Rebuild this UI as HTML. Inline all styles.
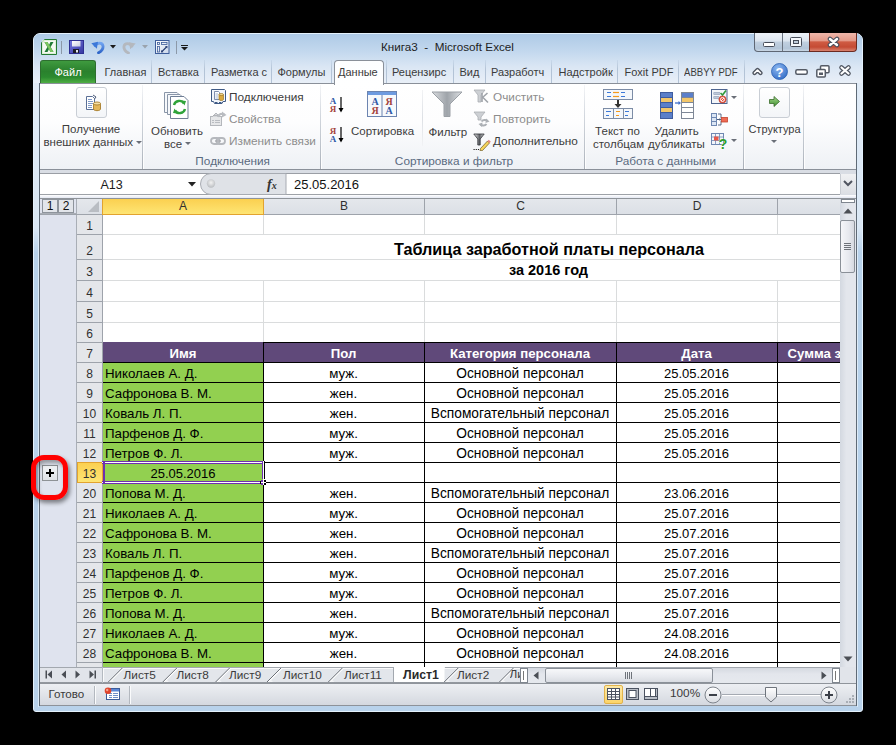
<!DOCTYPE html><html><head><meta charset="utf-8"><style>
html,body{margin:0;padding:0;width:896px;height:745px;overflow:hidden;background:#000;}
body{position:relative;font-family:"Liberation Sans",sans-serif;}
div{box-sizing:border-box;}
.t{position:absolute;white-space:nowrap;}
svg{display:block;}
</style></head><body>
<div style="position:absolute;left:33px;top:33px;width:830px;height:679px;background:#B8D2EB;border-radius:7px 7px 3px 3px;border:1px solid #E4F1FC;"></div>
<div style="position:absolute;left:34px;top:34px;width:828px;height:50px;background:linear-gradient(#AECAE6,#C3D8EE 35%,#DAE6F4 65%,#EAF0F8);border-radius:6px 6px 0 0;"></div>
<div style="position:absolute;left:34px;top:83px;width:5px;height:170px;background:linear-gradient(#E1EBF6,#DAE7F4 85%,#B8D2EB);"></div>
<div style="position:absolute;left:857px;top:83px;width:5px;height:170px;background:linear-gradient(#E1EBF6,#DAE7F4 85%,#B8D2EB);"></div>
<div style="position:absolute;left:38px;top:83px;width:1px;height:624px;background:#DCEAF7;"></div>
<div style="position:absolute;left:857px;top:83px;width:1px;height:624px;background:#DCEAF7;"></div>
<svg style="position:absolute;left:41px;top:39px;" width="16" height="16" viewBox="0 0 16 16"><path d="M3.5 0.5 H15.5 V15.5 H0.5 V3.5 Z" fill="#F4F9F2" stroke="#237A33"/>
<path d="M3.5 0.8 L0.8 3.5 H3.5 Z" fill="#D5E8D0"/>
<rect x="1.5" y="1.5" width="13" height="13" fill="none" stroke="#D8EBD3" stroke-width="0.8"/>
<path d="M3.5 3 H6.5 L8 6 L9.5 3 H12.5 L9.6 8 L12.5 13 H9.5 L8 10 L6.5 13 H3.5 L6.4 8 Z" fill="#1E7A35"/>
<path d="M3.5 3 H6.5 L12.5 13 H9.5 Z" fill="#7CC660"/></svg>
<div style="position:absolute;left:61px;top:41px;width:1px;height:13px;background:#8C99A8;"></div>
<svg style="position:absolute;left:69px;top:40px;" width="15" height="14" viewBox="0 0 15 14"><defs><linearGradient id="svg1" x1="0" y1="0" x2="1" y2="1"><stop offset="0" stop-color="#7678E0"/><stop offset="1" stop-color="#3436A0"/></linearGradient>
<linearGradient id="svg2" x1="0" y1="0" x2="1" y2="1"><stop offset="0" stop-color="#FFFFFF"/><stop offset="1" stop-color="#C9CCE0"/></linearGradient></defs>
<rect x="0.5" y="0.5" width="14" height="13" fill="url(#svg1)" stroke="#2E3092"/>
<rect x="3" y="1" width="8.5" height="5.5" fill="url(#svg2)"/>
<rect x="4" y="9" width="6" height="4" fill="#1C1C28"/>
<rect x="7" y="10" width="2" height="2.5" fill="#E6E8F0"/></svg>
<svg style="position:absolute;left:91px;top:40px;" width="14" height="14" viewBox="0 0 14 14"><defs><linearGradient id="ug" x1="0" y1="0" x2="0" y2="1"><stop offset="0" stop-color="#6FA3F0"/><stop offset="1" stop-color="#2D64C8"/></linearGradient></defs>
<path d="M4 5.5 C6 2.5 11.5 2 12 6 C12.4 9 10 11.5 7.5 12.8" fill="none" stroke="url(#ug)" stroke-width="2.8" stroke-linecap="round"/>
<path d="M0.3 3.2 L7 1.8 L5.8 8.8 Z" fill="#3C78D8"/></svg>
<svg style="position:absolute;left:110px;top:45px;" width="6" height="4" viewBox="0 0 6 4"><path d="M0 0 L6 0 L3 3.5 Z" fill="#1A1A1A"/></svg>
<svg style="position:absolute;left:122px;top:41px;" width="14" height="13" viewBox="0 0 14 13"><path d="M10 5 C8 1.8 2.5 1.5 2 5.3 C1.6 8.3 4 10.8 6.5 12" fill="none" stroke="#B4B8BE" stroke-width="2.8" stroke-linecap="round"/>
<path d="M13.7 2.6 L7 1.2 L8.2 8.2 Z" fill="#B4B8BE"/></svg>
<svg style="position:absolute;left:142px;top:45px;" width="6" height="4" viewBox="0 0 6 4"><path d="M0 0 L6 0 L3 3.5 Z" fill="#9AA3AD"/></svg>
<svg style="position:absolute;left:155px;top:40px;" width="15" height="14" viewBox="0 0 15 14"><defs><linearGradient id="fmg" x1="0" y1="0" x2="1" y2="1"><stop offset="0" stop-color="#FFFFFF"/><stop offset="1" stop-color="#C9D6EA"/></linearGradient></defs>
<rect x="0.5" y="0.5" width="13.5" height="13" fill="url(#fmg)" stroke="#3D5D9A"/>
<rect x="2.5" y="2.5" width="2" height="2" fill="none" stroke="#3D5D9A" stroke-width="0.8"/><rect x="6.5" y="2.5" width="5.5" height="2" fill="none" stroke="#3D5D9A" stroke-width="0.8"/>
<rect x="2.5" y="6.5" width="2" height="5.5" fill="none" stroke="#3D5D9A" stroke-width="0.8"/>
<path d="M7 11.5 L11.5 7" stroke="#233A70" stroke-width="1.1"/><path d="M10 6.2 L12.5 6 L12.3 8.5 Z" fill="#233A70"/><path d="M6.2 10 L6 12.5 L8.5 12.3 Z" fill="#233A70"/></svg>
<div style="position:absolute;left:176px;top:41px;width:1px;height:13px;background:#8C99A8;"></div>
<div style="position:absolute;left:181px;top:45px;width:7px;height:1px;background:#1A1A1A;"></div>
<svg style="position:absolute;left:181px;top:47px;" width="7" height="4" viewBox="0 0 7 4"><path d="M0 0 L7 0 L3.5 3.5 Z" fill="#1A1A1A"/></svg>
<div class="t" style="left:381px;top:39.5px;font-size:11.7px;color:#1E1E1E;line-height:14px;">Книга3&nbsp;&nbsp;-&nbsp;&nbsp;Microsoft Excel</div>
<div style="position:absolute;left:754px;top:33px;width:56px;height:19px;background:linear-gradient(#EDF2F8,#DCE5EF 45%,#C1D0E0 50%,#B3C5D8 85%,#C9D7E5);border:1px solid #5E6774;border-top:none;border-radius:0 0 0 4px;"></div>
<div style="position:absolute;left:782px;top:33px;width:1px;height:18px;background:#6A7380;"></div>
<svg style="position:absolute;left:763px;top:42px;" width="12" height="5" viewBox="0 0 12 5"><rect x="0.5" y="0.5" width="11" height="4" rx="1" fill="#FFF" stroke="#464C58"/></svg>
<svg style="position:absolute;left:790px;top:37px;" width="12" height="10" viewBox="0 0 12 10"><rect x="0.5" y="0.5" width="11" height="9" rx="1" fill="#F4F7FB" stroke="#464C58"/><rect x="3.5" y="3.5" width="5" height="3" fill="#BFCCDA" stroke="#464C58"/></svg>
<div style="position:absolute;left:809px;top:33px;width:48px;height:19px;background:linear-gradient(#EEB6AA,#E49A89 42%,#CF5B43 50%,#C54B34 78%,#D8826F);border:1px solid #6B2A20;border-top:none;border-radius:0 0 4px 0;"></div>
<svg style="position:absolute;left:826px;top:36px;" width="15" height="12" viewBox="0 0 15 12"><path d="M4 3 L11 9 M11 3 L4 9" stroke="#4A4F5C" stroke-width="4.6" stroke-linecap="round"/><path d="M4 3 L11 9 M11 3 L4 9" stroke="#FFFFFF" stroke-width="2.4" stroke-linecap="round"/></svg>
<div style="position:absolute;left:40px;top:60px;width:56px;height:24px;background:linear-gradient(#3F9A3F,#2A812D 45%,#2B8A2F 70%,#55B447);border:1px solid #2D6E2F;border-bottom:none;border-radius:3px 3px 0 0;"></div>
<div class="t" style="left:54.5px;top:66.69px;font-size:11px;color:#FFFFFF;line-height:11px;">Файл</div>
<div style="position:absolute;left:151px;top:60px;width:1px;height:23px;background:linear-gradient(rgba(160,180,205,0.2),#B3C3D6 40%,#B3C3D6);"></div>
<div style="position:absolute;left:204px;top:60px;width:1px;height:23px;background:linear-gradient(rgba(160,180,205,0.2),#B3C3D6 40%,#B3C3D6);"></div>
<div style="position:absolute;left:271px;top:60px;width:1px;height:23px;background:linear-gradient(rgba(160,180,205,0.2),#B3C3D6 40%,#B3C3D6);"></div>
<div style="position:absolute;left:331px;top:60px;width:1px;height:23px;background:linear-gradient(rgba(160,180,205,0.2),#B3C3D6 40%,#B3C3D6);"></div>
<div style="position:absolute;left:386px;top:60px;width:1px;height:23px;background:linear-gradient(rgba(160,180,205,0.2),#B3C3D6 40%,#B3C3D6);"></div>
<div style="position:absolute;left:453px;top:60px;width:1px;height:23px;background:linear-gradient(rgba(160,180,205,0.2),#B3C3D6 40%,#B3C3D6);"></div>
<div style="position:absolute;left:485px;top:60px;width:1px;height:23px;background:linear-gradient(rgba(160,180,205,0.2),#B3C3D6 40%,#B3C3D6);"></div>
<div style="position:absolute;left:551px;top:60px;width:1px;height:23px;background:linear-gradient(rgba(160,180,205,0.2),#B3C3D6 40%,#B3C3D6);"></div>
<div style="position:absolute;left:617px;top:60px;width:1px;height:23px;background:linear-gradient(rgba(160,180,205,0.2),#B3C3D6 40%,#B3C3D6);"></div>
<div style="position:absolute;left:678px;top:60px;width:1px;height:23px;background:linear-gradient(rgba(160,180,205,0.2),#B3C3D6 40%,#B3C3D6);"></div>
<div style="position:absolute;left:744px;top:60px;width:1px;height:23px;background:linear-gradient(rgba(160,180,205,0.2),#B3C3D6 40%,#B3C3D6);"></div>
<div class="t" style="left:104.5px;top:66.69px;font-size:11px;color:#3B3B3B;line-height:11px;">Главная</div>
<div class="t" style="left:158px;top:66.69px;font-size:11px;color:#3B3B3B;line-height:11px;">Вставка</div>
<div style="position:absolute;left:211px;top:60px;width:59px;height:23px;overflow:hidden;"><div class="t" style="left:0;top:6.69px;font-size:11px;line-height:11px;color:#3B3B3B;">Разметка с</div></div>
<div class="t" style="left:277.5px;top:66.69px;font-size:11px;color:#3B3B3B;line-height:11px;">Формулы</div>
<div style="position:absolute;left:392px;top:60px;width:60px;height:23px;overflow:hidden;"><div class="t" style="left:0;top:6.69px;font-size:11px;line-height:11px;color:#3B3B3B;">Рецензирс</div></div>
<div class="t" style="left:459.5px;top:66.69px;font-size:11px;color:#3B3B3B;line-height:11px;">Вид</div>
<div style="position:absolute;left:491px;top:60px;width:59px;height:23px;overflow:hidden;"><div class="t" style="left:0;top:6.69px;font-size:11px;line-height:11px;color:#3B3B3B;">Разработч</div></div>
<div style="position:absolute;left:558.5px;top:60px;width:54.5px;height:23px;overflow:hidden;"><div class="t" style="left:0;top:6.69px;font-size:11px;line-height:11px;color:#3B3B3B;">Надстройк</div></div>
<div class="t" style="left:624.5px;top:66.69px;font-size:11px;color:#3B3B3B;line-height:11px;">Foxit PDF</div>
<div style="position:absolute;left:683.5px;top:60px;width:59.5px;height:23px;overflow:hidden;"><div class="t" style="left:0;top:6.69px;font-size:11px;line-height:11px;color:#3B3B3B;transform:scaleX(0.87);transform-origin:0 0;">ABBYY PDF</div></div>
<div style="position:absolute;left:39px;top:83px;width:818px;height:87px;background:linear-gradient(#FFFFFF,#FDFDFE 45%,#EEF1F5);border:1px solid #8A9099;"></div>
<div style="position:absolute;left:334px;top:60px;width:50px;height:25px;background:linear-gradient(#FDFEFF,#FFFFFF);border:1px solid #8A9099;border-bottom:none;border-radius:4px 4px 0 0;"></div>
<div class="t" style="left:338px;top:66.69px;font-size:11px;color:#3B3B3B;line-height:11px;">Данные</div>
<svg style="position:absolute;left:751px;top:65px;" width="13" height="12" viewBox="0 0 13 12"><path d="M3.5 8 L6.5 5 L9.5 8" fill="none" stroke="#4F5560" stroke-width="4.4" stroke-linejoin="round" stroke-linecap="round"/><path d="M3.5 8 L6.5 5 L9.5 8" fill="none" stroke="#FFFFFF" stroke-width="1.6" stroke-linejoin="round" stroke-linecap="round"/></svg>
<svg style="position:absolute;left:770.5px;top:62.5px;" width="17" height="17" viewBox="0 0 17 17"><defs><radialGradient id="hg" cx="0.4" cy="0.3" r="0.8"><stop offset="0" stop-color="#8DB8F0"/><stop offset="1" stop-color="#2E68C4"/></radialGradient></defs><circle cx="8.5" cy="8.5" r="8" fill="url(#hg)" stroke="#2A5FB0" stroke-width="0.8"/><text x="8.5" y="13.5" font-family="Liberation Sans" font-weight="bold" font-size="13" fill="#FFF" text-anchor="middle">?</text></svg>
<svg style="position:absolute;left:795px;top:69px;" width="13" height="6" viewBox="0 0 13 6"><rect x="0.8" y="0.8" width="11.4" height="4.4" rx="1.5" fill="#FFF" stroke="#555B66" stroke-width="1.5"/></svg>
<svg style="position:absolute;left:816px;top:65px;" width="14" height="13" viewBox="0 0 14 13"><rect x="4.5" y="0.8" width="8.5" height="7" rx="1" fill="#FFF" stroke="#555B66" stroke-width="1.5"/><rect x="0.8" y="4.5" width="8.5" height="7.5" rx="1" fill="#FFF" stroke="#555B66" stroke-width="1.5"/><rect x="3" y="7.5" width="4" height="2.5" fill="#555B66"/></svg>
<svg style="position:absolute;left:838px;top:64px;" width="14" height="13" viewBox="0 0 14 13"><path d="M3.5 3.5 L10.5 9.5 M10.5 3.5 L3.5 9.5" stroke="#4F5560" stroke-width="4.6" stroke-linecap="round"/><path d="M3.5 3.5 L10.5 9.5 M10.5 3.5 L3.5 9.5" stroke="#FFF" stroke-width="2.2" stroke-linecap="round"/></svg>
<div style="position:absolute;left:142px;top:85px;width:1px;height:84px;background:linear-gradient(rgba(220,224,230,0.3),#D3D8DF 35%,#B9BFC7 80%,#A9AFB8);"></div>
<div style="position:absolute;left:143px;top:110px;width:1px;height:59px;background:linear-gradient(rgba(255,255,255,0),#FFFFFF);"></div>
<div style="position:absolute;left:320px;top:85px;width:1px;height:84px;background:linear-gradient(rgba(220,224,230,0.3),#D3D8DF 35%,#B9BFC7 80%,#A9AFB8);"></div>
<div style="position:absolute;left:321px;top:110px;width:1px;height:59px;background:linear-gradient(rgba(255,255,255,0),#FFFFFF);"></div>
<div style="position:absolute;left:584px;top:85px;width:1px;height:84px;background:linear-gradient(rgba(220,224,230,0.3),#D3D8DF 35%,#B9BFC7 80%,#A9AFB8);"></div>
<div style="position:absolute;left:585px;top:110px;width:1px;height:59px;background:linear-gradient(rgba(255,255,255,0),#FFFFFF);"></div>
<div style="position:absolute;left:743px;top:85px;width:1px;height:84px;background:linear-gradient(rgba(220,224,230,0.3),#D3D8DF 35%,#B9BFC7 80%,#A9AFB8);"></div>
<div style="position:absolute;left:744px;top:110px;width:1px;height:59px;background:linear-gradient(rgba(255,255,255,0),#FFFFFF);"></div>
<div style="position:absolute;left:803px;top:85px;width:1px;height:84px;background:linear-gradient(rgba(220,224,230,0.3),#D3D8DF 35%,#B9BFC7 80%,#A9AFB8);"></div>
<div style="position:absolute;left:804px;top:110px;width:1px;height:59px;background:linear-gradient(rgba(255,255,255,0),#FFFFFF);"></div>
<div style="position:absolute;left:76px;top:87px;width:31px;height:31px;background:linear-gradient(#FFFFFF,#F3F5F8);border:1px solid #C9CED5;border-radius:3px;"></div>
<svg style="position:absolute;left:83px;top:94px;" width="18" height="18" viewBox="0 0 18 18"><path d="M3.5 2.5 H9.5 L11.5 4.5 V15.5 H3.5 Z" fill="#FFFFFF" stroke="#5A6F96"/>
<path d="M5 5.5 H9 M5 7.5 H10 M5 9.5 H10 M5 11.5 H9 M5 13.5 H9" stroke="#7F9AC8"/>
<path d="M10 1 L13 3 L11.5 5" fill="none" stroke="#4A5A78" stroke-width="1"/>
<path d="M10.5 9.5 V15 C10.5 17.2 17.5 17.2 17.5 15 V9.5" fill="#E3B75A" stroke="#A67C2A" stroke-width="0.9"/>
<ellipse cx="14" cy="9.5" rx="3.5" ry="1.5" fill="#F6E0A4" stroke="#A67C2A" stroke-width="0.9"/></svg>
<div class="t" style="left:-59.0px;top:123.87px;font-size:11.5px;color:#3C3C3C;line-height:11.5px;width:300px;text-align:center;">Получение</div>
<div class="t" style="left:43.5px;top:136.87px;font-size:11.5px;color:#3C3C3C;line-height:11.5px;">внешних данных</div>
<svg style="position:absolute;left:135.5px;top:141px;" width="6" height="4" viewBox="0 0 6 4"><path d="M0 0 L6 0 L3 3 Z" fill="#6A6F78"/></svg>
<svg style="position:absolute;left:162px;top:90px;" width="30" height="30" viewBox="0 0 30 30"><path d="M2.5 2.5 H15 L18 5.5 V22.5 H2.5 Z" fill="#F6F8FB" stroke="#8A96A8"/>
<path d="M5.5 4.5 H18 L21 7.5 V24.5 H5.5 Z" fill="#F6F8FB" stroke="#8A96A8"/>
<path d="M8.5 6.5 H22 L26 10.5 V28.5 H8.5 Z" fill="#FFFFFF" stroke="#6F7E95"/>
<path d="M12 15 A5.5 5.5 0 0 1 22 13.5" fill="none" stroke="#2FA33A" stroke-width="2.4"/>
<path d="M23 19 A5.5 5.5 0 0 1 13 20.5" fill="none" stroke="#2FA33A" stroke-width="2.4"/>
<path d="M19.5 10.5 L24 11 L22.5 15.5 Z" fill="#2FA33A"/><path d="M15.5 23.5 L11 23 L12.5 18.5 Z" fill="#2FA33A"/></svg>
<div class="t" style="left:27.0px;top:126.07px;font-size:11.5px;color:#3C3C3C;line-height:11.5px;width:300px;text-align:center;">Обновить</div>
<div class="t" style="left:164px;top:138.77px;font-size:11.5px;color:#3C3C3C;line-height:11.5px;">все</div>
<svg style="position:absolute;left:184.5px;top:142px;" width="6" height="4" viewBox="0 0 6 4"><path d="M0 0 L6 0 L3 3 Z" fill="#6A6F78"/></svg>
<svg style="position:absolute;left:210px;top:89px;" width="17" height="16" viewBox="0 0 17 16"><path d="M1.5 0.5 H14.5 L15.5 1.5 V12.5 H13 L12 14.5 H4.5 L3.5 12.5 H1.5 Z" fill="#F2F6FC" stroke="#3F5A85"/>
<path d="M4.5 2.5 H8.5 L9.5 3.5 V10.5 H4.5 Z" fill="#FFFFFF" stroke="#5E7299" stroke-width="0.8"/>
<path d="M5.5 5 H8 M5.5 7 H8 M5.5 9 H8" stroke="#8FA4C8" stroke-width="0.8"/>
<path d="M9 5.5 V10.5 C9 11.8 13.5 11.8 13.5 10.5 V5.5" fill="#D9A93E" stroke="#9A7424" stroke-width="0.7"/>
<ellipse cx="11.25" cy="5.5" rx="2.25" ry="1" fill="#F3D98F" stroke="#9A7424" stroke-width="0.7"/>
<path d="M5 13.5 H7.5 M9 13.5 H11.5" stroke="#3F5A85"/></svg>
<div class="t" style="left:229px;top:91.81px;font-size:11.8px;color:#3C3C3C;line-height:11.8px;">Подключения</div>
<svg style="position:absolute;left:210px;top:111px;" width="17" height="16" viewBox="0 0 17 16"><rect x="0.5" y="5.5" width="11" height="9" fill="#E6E7E9" stroke="#B4B7BC"/>
<path d="M2 9.5 H4 M5 9.5 H10 M2 11.5 H4 M5 11.5 H10" stroke="#B9BCC1"/>
<path d="M2 6 L6 2 L10 6" fill="#D5D7DA" stroke="#B4B7BC"/>
<path d="M3 5 L4 4 L5 5 L6 4 L7 5 L8 4" fill="none" stroke="#A8ABB0" stroke-width="0.8"/>
<path d="M8 6 C9 3 12 2 14 3.5" fill="none" stroke="#B9BCC1" stroke-width="2.2"/>
<path d="M12 0.5 L16.5 4 L12 6.5 Z" fill="#B9BCC1"/></svg>
<div class="t" style="left:229px;top:113.81px;font-size:11.8px;color:#8D8D8D;line-height:11.8px;">Свойства</div>
<svg style="position:absolute;left:210px;top:134px;" width="17" height="14" viewBox="0 0 17 14"><rect x="1" y="4" width="8.5" height="6" rx="3" fill="none" stroke="#B5B8BD" stroke-width="1.8"/><rect x="6.5" y="4" width="8.5" height="6" rx="3" fill="none" stroke="#B5B8BD" stroke-width="1.8"/><path d="M5 7 H11" stroke="#A3A6AB" stroke-width="1.2"/></svg>
<div class="t" style="left:229px;top:135.81px;font-size:11.8px;color:#8D8D8D;line-height:11.8px;">Изменить связи</div>
<div class="t" style="left:82.69999999999999px;top:156.01px;font-size:11.8px;color:#5A6A80;line-height:11.8px;width:300px;text-align:center;">Подключения</div>
<svg style="position:absolute;left:329px;top:96px;" width="16" height="18" viewBox="0 0 16 18"><text x="4" y="8" font-family="Liberation Serif" font-weight="bold" font-size="9" fill="#2F57A6" text-anchor="middle">A</text>
<text x="4" y="16" font-family="Liberation Serif" font-weight="bold" font-size="9" fill="#A4433C" text-anchor="middle">Я</text>
<path d="M12 1 V15" stroke="#000" stroke-width="1.2"/><path d="M9.5 12 L12 16.5 L14.5 12Z" fill="#000"/></svg>
<svg style="position:absolute;left:329px;top:126px;" width="16" height="18" viewBox="0 0 16 18"><text x="4" y="8" font-family="Liberation Serif" font-weight="bold" font-size="9" fill="#A4433C" text-anchor="middle">Я</text>
<text x="4" y="16" font-family="Liberation Serif" font-weight="bold" font-size="9" fill="#2F57A6" text-anchor="middle">A</text>
<path d="M12 1 V15" stroke="#000" stroke-width="1.2"/><path d="M9.5 12 L12 16.5 L14.5 12Z" fill="#000"/></svg>
<svg style="position:absolute;left:367px;top:91px;" width="30" height="27" viewBox="0 0 30 27"><rect x="0.5" y="0.5" width="29" height="25" fill="#F7F9FC" stroke="#6C84B0"/>
<rect x="1" y="1" width="28" height="3" fill="#6E9BE0"/>
<path d="M15 4 V25.5" stroke="#6C84B0"/>
<text x="8" y="14" font-family="Liberation Serif" font-weight="bold" font-size="10" fill="#2F57A6" text-anchor="middle">A</text>
<text x="8" y="23" font-family="Liberation Serif" font-weight="bold" font-size="10" fill="#A4433C" text-anchor="middle">Я</text>
<text x="22" y="14" font-family="Liberation Serif" font-weight="bold" font-size="10" fill="#A4433C" text-anchor="middle">Я</text>
<text x="22" y="23" font-family="Liberation Serif" font-weight="bold" font-size="10" fill="#2F57A6" text-anchor="middle">A</text></svg>
<div class="t" style="left:351px;top:125.87px;font-size:11.5px;color:#3C3C3C;line-height:11.5px;">Сортировка</div>
<div style="position:absolute;left:422px;top:90px;width:1px;height:56px;background:linear-gradient(#F2F3F5,#DDE0E5 50%,#F2F3F5);"></div>
<svg style="position:absolute;left:431px;top:91px;" width="32" height="27" viewBox="0 0 32 27"><defs><linearGradient id="fg" x1="0" x2="1"><stop offset="0" stop-color="#D9DCDF"/><stop offset="0.5" stop-color="#9FA4AA"/><stop offset="1" stop-color="#DCDFE2"/></linearGradient></defs>
<path d="M1 1 H31 L19 13 V25.5 H13 V13 Z" fill="url(#fg)" stroke="#9BA0A6"/></svg>
<div class="t" style="left:428.5px;top:126.57px;font-size:11.5px;color:#3C3C3C;line-height:11.5px;">Фильтр</div>
<svg style="position:absolute;left:473px;top:89px;" width="17" height="16" viewBox="0 0 17 16"><path d="M1 1 H12 L8 6 V13 H5 V6 Z" fill="#CDD0D4" stroke="#A9ADB2" stroke-width="0.8"/><path d="M9 4 V13 M9.5 8.5 L14.5 4 M10 8.5 L15 13.5" stroke="#A0A4AA" stroke-width="1.6"/></svg>
<div class="t" style="left:493px;top:92.31px;font-size:11.8px;color:#8D8D8D;line-height:11.8px;">Очистить</div>
<svg style="position:absolute;left:473px;top:111px;" width="18" height="17" viewBox="0 0 18 17"><path d="M1 1 H12 L8 6 V9 H5 V6 Z" fill="#CDD0D4" stroke="#A9ADB2" stroke-width="0.8"/><path d="M8.5 10.5 C10 8.5 13 8.5 14.5 10" fill="none" stroke="#ACB0B5" stroke-width="2"/><path d="M13 7.5 L16.5 10.5 L12.5 12 Z" fill="#ACB0B5"/><path d="M13.5 13 C12 15 9 15 7.5 13.5" fill="none" stroke="#ACB0B5" stroke-width="2"/><path d="M9 16 L5.5 13 L9.5 11.5 Z" fill="#ACB0B5"/></svg>
<div class="t" style="left:493px;top:113.81px;font-size:11.8px;color:#8D8D8D;line-height:11.8px;">Повторить</div>
<svg style="position:absolute;left:473px;top:133px;" width="18" height="18" viewBox="0 0 18 18"><defs><linearGradient id="af" x1="0" x2="1"><stop offset="0" stop-color="#F2F3F4"/><stop offset="0.55" stop-color="#5E6166"/><stop offset="1" stop-color="#D5D7DA"/></linearGradient></defs><path d="M0.8 1 H11.2 L7.2 6 V12 H4.8 V6 Z" fill="url(#af)" stroke="#2E3136" stroke-width="0.8"/><path d="M7.5 15.5 L14.5 8 L16.5 10 L9.5 17.5 L7 17.8 Z" fill="#F6D35A" stroke="#6B5A2A" stroke-width="0.7"/><path d="M14.5 8 L15.8 6.8 L17.8 8.8 L16.5 10Z" fill="#E8837A"/><path d="M0.5 16.5 H6" stroke="#222" stroke-width="1.2" stroke-dasharray="1.2 1"/></svg>
<div class="t" style="left:493px;top:135.81px;font-size:11.8px;color:#3C3C3C;line-height:11.8px;">Дополнительно</div>
<div class="t" style="left:304.0px;top:156.01px;font-size:11.8px;color:#5A6A80;line-height:11.8px;width:300px;text-align:center;">Сортировка и фильтр</div>
<svg style="position:absolute;left:602px;top:88px;" width="32" height="32" viewBox="0 0 32 32"><rect x="1.5" y="1.5" width="29" height="10" fill="#F4F7FB" stroke="#7C8CA6"/>
<path d="M5 4.5 H9 M11 4.5 H17 M19 4.5 H23" stroke="#3B78D8" stroke-width="1.2"/>
<path d="M5 8.5 H9 M19 8.5 H23" stroke="#3B78D8" stroke-width="1.2"/><path d="M11 8.5 H17" stroke="#F59A1B" stroke-width="1.2"/>
<path d="M11 4.5 H17" stroke="#F59A1B" stroke-width="1.2"/>
<path d="M16 12 V17" stroke="#333" stroke-width="2"/><path d="M12.5 16 L16 20 L19.5 16Z" fill="#333"/>
<rect x="1.5" y="20.5" width="29" height="10" fill="#F4F7FB" stroke="#7C8CA6"/>
<path d="M11.5 20.5 V30.5 M21.5 20.5 V30.5" stroke="#7C8CA6"/>
<path d="M4 23.5 H9 M4 27.5 H7 M23 23.5 H27 M23 27.5 H26" stroke="#3B78D8" stroke-width="1.2"/><path d="M14 23.5 H18 M14 27.5 H17" stroke="#F59A1B" stroke-width="1.2"/></svg>
<div class="t" style="left:467.5px;top:126.27px;font-size:11.5px;color:#3C3C3C;line-height:11.5px;width:300px;text-align:center;">Текст по</div>
<div class="t" style="left:468.5px;top:138.67px;font-size:11.5px;color:#3C3C3C;line-height:11.5px;width:300px;text-align:center;">столбцам</div>
<svg style="position:absolute;left:660px;top:92px;" width="34" height="28" viewBox="0 0 34 28"><rect x="0.5" y="0.5" width="12" height="26" fill="#5B7FC9" stroke="#3F5C9E"/>
<rect x="1" y="6" width="11" height="5" fill="#F2C66A"/><rect x="1" y="16" width="11" height="5" fill="#F2C66A"/>
<path d="M0.5 5.5 H12.5 M0.5 10.5 H12.5 M0.5 15.5 H12.5 M0.5 20.5 H12.5" stroke="#3F5C9E"/>
<path d="M15 11 H19" stroke="#3F6FC9" stroke-width="1.3"/><path d="M18.5 9 L21 11 L18.5 13Z" fill="#3F6FC9"/>
<rect x="21.5" y="0.5" width="12" height="26" fill="#FFFFFF" stroke="#7E8796"/>
<rect x="22" y="1" width="11" height="4.5" fill="#5B7FC9"/><rect x="22" y="6" width="11" height="4.5" fill="#F2C66A"/>
<path d="M21.5 5.5 H33.5 M21.5 10.5 H33.5 M21.5 15.5 H33.5 M21.5 20.5 H33.5" stroke="#7E8796"/></svg>
<div class="t" style="left:526.8px;top:126.27px;font-size:11.5px;color:#3C3C3C;line-height:11.5px;width:300px;text-align:center;">Удалить</div>
<div class="t" style="left:526.5px;top:138.67px;font-size:11.5px;color:#3C3C3C;line-height:11.5px;width:300px;text-align:center;">дубликаты</div>
<svg style="position:absolute;left:711px;top:89px;" width="17" height="15" viewBox="0 0 17 15"><rect x="0.5" y="0.5" width="15.5" height="14" fill="#F3F6FA" stroke="#4E6590"/><path d="M2.5 4.5 H9 M2.5 8.5 H8" stroke="#5E7396" stroke-width="2"/><path d="M2.5 4.5 H9 M2.5 8.5 H8" stroke="#D6DEEA" stroke-width="0.8"/><path d="M9.5 4 L11.5 6 L15 1.5" stroke="#2F9A3A" stroke-width="1.6" fill="none"/><circle cx="11.5" cy="10.5" r="3.6" fill="#E5533F" stroke="#B63A2A" stroke-width="0.6"/><circle cx="11.5" cy="10.5" r="2" fill="none" stroke="#FFF" stroke-width="0.9"/><path d="M10 12 L13 9" stroke="#FFF" stroke-width="0.9"/></svg>
<svg style="position:absolute;left:731px;top:95.5px;" width="6" height="4" viewBox="0 0 6 4"><path d="M0 0 L6 0 L3 3 Z" fill="#6A6F78"/></svg>
<svg style="position:absolute;left:711px;top:113px;" width="18" height="14" viewBox="0 0 18 14"><rect x="0.5" y="0.5" width="5" height="12" fill="#DCE6F4" stroke="#6F88B2"/><path d="M0.5 4.5 H5.5 M0.5 8.5 H5.5" stroke="#6F88B2"/><path d="M7 1 H10 V5 M7 12 H10 V8" fill="none" stroke="#4A5E80" stroke-width="0.9"/><path d="M6 6.5 H9" stroke="#4A5E80"/><path d="M8.5 5 L10.5 6.5 L8.5 8Z" fill="#4A5E80"/><rect x="10.5" y="4.5" width="6" height="4.5" fill="#EF6B55" stroke="#C2452F" stroke-width="0.8"/></svg>
<svg style="position:absolute;left:711px;top:133px;" width="18" height="17" viewBox="0 0 18 17"><rect x="0.5" y="0.5" width="12" height="11" fill="#F3F6FB" stroke="#6F88B2"/><path d="M0.5 4 H12.5 M0.5 7.5 H12.5 M4.5 0.5 V11.5 M8.5 0.5 V11.5" stroke="#6F88B2" stroke-width="0.8"/><rect x="3" y="3.5" width="4.5" height="4" fill="#E8584A"/><text x="12" y="16" font-family="Liberation Sans" font-weight="bold" font-size="14" fill="#2F9E2F" stroke="#FFFFFF" stroke-width="0.6" paint-order="stroke" text-anchor="middle">?</text></svg>
<svg style="position:absolute;left:731px;top:139px;" width="6" height="4" viewBox="0 0 6 4"><path d="M0 0 L6 0 L3 3 Z" fill="#6A6F78"/></svg>
<div class="t" style="left:515.7px;top:156.01px;font-size:11.8px;color:#5A6A80;line-height:11.8px;width:300px;text-align:center;">Работа с данными</div>
<div style="position:absolute;left:759px;top:87px;width:31px;height:31px;background:linear-gradient(#FFFFFF,#F3F5F8);border:1px solid #C9CED5;border-radius:3px;"></div>
<svg style="position:absolute;left:769px;top:96px;" width="11" height="11" viewBox="0 0 11 11"><defs><linearGradient id="ag" x1="0" y1="0" x2="0" y2="1"><stop offset="0" stop-color="#A6D98E"/><stop offset="1" stop-color="#3E8E2E"/></linearGradient></defs><path d="M0.5 3.5 H5 V0.5 L10.5 5.5 L5 10.5 V7.5 H0.5 Z" fill="url(#ag)" stroke="#3A6B2C" stroke-width="0.8"/></svg>
<div class="t" style="left:624.5px;top:124.29px;font-size:11px;color:#3C3C3C;line-height:11px;width:300px;text-align:center;">Структура</div>
<svg style="position:absolute;left:771px;top:140px;" width="6" height="4" viewBox="0 0 6 4"><path d="M0 0 L6 0 L3 3 Z" fill="#6A6F78"/></svg>
<div style="position:absolute;left:39px;top:170px;width:818px;height:29px;background:#D9DDE4;border-left:1px solid #5F6A76;border-right:1px solid #5F6A76;"></div>
<div style="position:absolute;left:40px;top:173px;width:800px;height:22px;background:#FFFFFF;border-top:1px solid #9A9EA5;border-bottom:1px solid #9EA2A8;"></div>
<div style="position:absolute;left:40px;top:195px;width:816px;height:3px;background:linear-gradient(#FFFFFF,#E4E8F3);"></div>
<div style="position:absolute;left:40px;top:198px;width:816px;height:1px;background:#8F949A;"></div>
<div class="t" style="left:100.5px;top:178.92px;font-size:12.5px;color:#1B1B1B;line-height:12.5px;">A13</div>
<svg style="position:absolute;left:188px;top:182px;" width="8" height="5" viewBox="0 0 8 5"><path d="M0 0 L8 0 L4 4.5 Z" fill="#222"/></svg>
<svg style="position:absolute;left:200px;top:173px;" width="87" height="22" viewBox="0 0 87 22"><path d="M11 0.5 H86 V21.5 H11 A10.5 10.5 0 0 1 11 0.5 Z" fill="#DFE2E7" stroke="#A7ABB2"/>
<defs><radialGradient id="cg" cx="0.5" cy="0.4" r="0.6"><stop offset="0" stop-color="#F2F2F2"/><stop offset="1" stop-color="#B9BCC0"/></radialGradient></defs>
<circle cx="11" cy="10.5" r="4.2" fill="url(#cg)"/></svg>
<div class="t" style="left:267px;top:176.5px;font-size:14px;color:#333;line-height:14px;"><i style="font-family:Liberation Serif;font-weight:bold;">f</i><i style="font-family:Liberation Serif;font-weight:bold;font-size:10px;">x</i></div>
<div class="t" style="left:294px;top:177.5px;font-size:13px;color:#111;line-height:13px;">25.05.2016</div>
<div style="position:absolute;left:840px;top:174px;width:16px;height:20px;background:linear-gradient(#F0F1F3,#DCDFE4);border-left:1px solid #C8CCD2;"></div>
<svg style="position:absolute;left:843px;top:180px;" width="10" height="7" viewBox="0 0 10 7"><path d="M1 1 L5 5 L9 1" fill="none" stroke="#505560" stroke-width="2"/></svg>
<div style="position:absolute;left:40px;top:199px;width:37px;height:468px;background:#DFE3EE;"></div>
<div style="position:absolute;left:76px;top:199px;width:1px;height:468px;background:#A9AEB6;"></div>
<div style="position:absolute;left:42px;top:199px;width:16px;height:14px;background:#E2E5EA;border:1px solid #8E949C;"></div>
<div class="t" style="left:42.0px;top:200.34px;font-size:12px;color:#111;line-height:12px;width:16px;text-align:center;">1</div>
<div style="position:absolute;left:58px;top:199px;width:16px;height:14px;background:#E2E5EA;border:1px solid #8E949C;"></div>
<div class="t" style="left:58.0px;top:200.34px;font-size:12px;color:#111;line-height:12px;width:16px;text-align:center;">2</div>
<div style="position:absolute;left:40px;top:213px;width:37px;height:1px;background:#A9AEB6;"></div>
<div style="position:absolute;left:103px;top:215px;width:737px;height:452px;background:#FFFFFF;"></div>
<div style="position:absolute;left:77px;top:199px;width:763px;height:15px;background:linear-gradient(#E4E7EC,#DCE0E6);"></div>
<div style="position:absolute;left:40px;top:214px;width:800px;height:1px;background:#9EA3AB;"></div>
<svg style="position:absolute;left:77px;top:199px;" width="26" height="15" viewBox="0 0 26 15"><path d="M22 2 L22 13 L11 13 Z" fill="#B9BDC3"/></svg>
<div style="position:absolute;left:102px;top:199px;width:1px;height:468px;background:#9EA3AB;"></div>
<div style="position:absolute;left:263px;top:199px;width:1px;height:15px;background:#9EA3AB;"></div>
<div style="position:absolute;left:424px;top:199px;width:1px;height:15px;background:#9EA3AB;"></div>
<div style="position:absolute;left:616px;top:199px;width:1px;height:15px;background:#9EA3AB;"></div>
<div style="position:absolute;left:777px;top:199px;width:1px;height:15px;background:#9EA3AB;"></div>
<div style="position:absolute;left:102px;top:199px;width:162px;height:16px;background:linear-gradient(#FBD050,#FEE574);border:1px solid #E2A32F;border-top:none;"></div>
<div class="t" style="left:163.0px;top:199.84px;font-size:12px;color:#303030;line-height:12px;width:40px;text-align:center;">A</div>
<div class="t" style="left:324.0px;top:199.84px;font-size:12px;color:#303030;line-height:12px;width:40px;text-align:center;">B</div>
<div class="t" style="left:500.5px;top:199.84px;font-size:12px;color:#303030;line-height:12px;width:40px;text-align:center;">C</div>
<div class="t" style="left:677.0px;top:199.84px;font-size:12px;color:#303030;line-height:12px;width:40px;text-align:center;">D</div>
<div style="position:absolute;left:77px;top:215px;width:25px;height:452px;background:#E4E6EA;"></div>
<div style="position:absolute;left:77px;top:234px;width:25px;height:1px;background:#9EA3AB;"></div>
<div class="t" style="left:77.5px;top:219.84px;font-size:12px;color:#303030;line-height:12px;width:24px;text-align:center;">1</div>
<div style="position:absolute;left:77px;top:259px;width:25px;height:1px;background:#9EA3AB;"></div>
<div class="t" style="left:77.5px;top:244.84px;font-size:12px;color:#303030;line-height:12px;width:24px;text-align:center;">2</div>
<div style="position:absolute;left:77px;top:280px;width:25px;height:1px;background:#9EA3AB;"></div>
<div class="t" style="left:77.5px;top:265.84px;font-size:12px;color:#303030;line-height:12px;width:24px;text-align:center;">3</div>
<div style="position:absolute;left:77px;top:301px;width:25px;height:1px;background:#9EA3AB;"></div>
<div class="t" style="left:77.5px;top:286.84px;font-size:12px;color:#303030;line-height:12px;width:24px;text-align:center;">4</div>
<div style="position:absolute;left:77px;top:322px;width:25px;height:1px;background:#9EA3AB;"></div>
<div class="t" style="left:77.5px;top:307.84px;font-size:12px;color:#303030;line-height:12px;width:24px;text-align:center;">5</div>
<div style="position:absolute;left:77px;top:342px;width:25px;height:1px;background:#9EA3AB;"></div>
<div class="t" style="left:77.5px;top:327.84px;font-size:12px;color:#303030;line-height:12px;width:24px;text-align:center;">6</div>
<div style="position:absolute;left:77px;top:362px;width:25px;height:1px;background:#9EA3AB;"></div>
<div class="t" style="left:77.5px;top:347.84px;font-size:12px;color:#303030;line-height:12px;width:24px;text-align:center;">7</div>
<div style="position:absolute;left:77px;top:382px;width:25px;height:1px;background:#9EA3AB;"></div>
<div class="t" style="left:77.5px;top:367.84px;font-size:12px;color:#303030;line-height:12px;width:24px;text-align:center;">8</div>
<div style="position:absolute;left:77px;top:402px;width:25px;height:1px;background:#9EA3AB;"></div>
<div class="t" style="left:77.5px;top:387.84px;font-size:12px;color:#303030;line-height:12px;width:24px;text-align:center;">9</div>
<div style="position:absolute;left:77px;top:422px;width:25px;height:1px;background:#9EA3AB;"></div>
<div class="t" style="left:77.5px;top:407.84px;font-size:12px;color:#303030;line-height:12px;width:24px;text-align:center;">10</div>
<div style="position:absolute;left:77px;top:442px;width:25px;height:1px;background:#9EA3AB;"></div>
<div class="t" style="left:77.5px;top:427.84px;font-size:12px;color:#303030;line-height:12px;width:24px;text-align:center;">11</div>
<div style="position:absolute;left:77px;top:462px;width:25px;height:1px;background:#9EA3AB;"></div>
<div class="t" style="left:77.5px;top:447.84px;font-size:12px;color:#303030;line-height:12px;width:24px;text-align:center;">12</div>
<div style="position:absolute;left:77px;top:482px;width:25px;height:1px;background:#9EA3AB;"></div>
<div style="position:absolute;left:77px;top:462px;width:26px;height:21px;background:linear-gradient(#FBD050,#FEE574);border:1px solid #E2A32F;"></div>
<div class="t" style="left:77.5px;top:467.84px;font-size:12px;color:#303030;line-height:12px;width:24px;text-align:center;">13</div>
<div style="position:absolute;left:77px;top:502px;width:25px;height:1px;background:#9EA3AB;"></div>
<div class="t" style="left:77.5px;top:487.84px;font-size:12px;color:#303030;line-height:12px;width:24px;text-align:center;">20</div>
<div style="position:absolute;left:77px;top:522px;width:25px;height:1px;background:#9EA3AB;"></div>
<div class="t" style="left:77.5px;top:507.84px;font-size:12px;color:#303030;line-height:12px;width:24px;text-align:center;">21</div>
<div style="position:absolute;left:77px;top:542px;width:25px;height:1px;background:#9EA3AB;"></div>
<div class="t" style="left:77.5px;top:527.84px;font-size:12px;color:#303030;line-height:12px;width:24px;text-align:center;">22</div>
<div style="position:absolute;left:77px;top:562px;width:25px;height:1px;background:#9EA3AB;"></div>
<div class="t" style="left:77.5px;top:547.84px;font-size:12px;color:#303030;line-height:12px;width:24px;text-align:center;">23</div>
<div style="position:absolute;left:77px;top:582px;width:25px;height:1px;background:#9EA3AB;"></div>
<div class="t" style="left:77.5px;top:567.84px;font-size:12px;color:#303030;line-height:12px;width:24px;text-align:center;">24</div>
<div style="position:absolute;left:77px;top:602px;width:25px;height:1px;background:#9EA3AB;"></div>
<div class="t" style="left:77.5px;top:587.84px;font-size:12px;color:#303030;line-height:12px;width:24px;text-align:center;">25</div>
<div style="position:absolute;left:77px;top:622px;width:25px;height:1px;background:#9EA3AB;"></div>
<div class="t" style="left:77.5px;top:607.84px;font-size:12px;color:#303030;line-height:12px;width:24px;text-align:center;">26</div>
<div style="position:absolute;left:77px;top:642px;width:25px;height:1px;background:#9EA3AB;"></div>
<div class="t" style="left:77.5px;top:627.84px;font-size:12px;color:#303030;line-height:12px;width:24px;text-align:center;">27</div>
<div style="position:absolute;left:77px;top:662px;width:25px;height:1px;background:#9EA3AB;"></div>
<div class="t" style="left:77.5px;top:647.84px;font-size:12px;color:#303030;line-height:12px;width:24px;text-align:center;">28</div>
<div style="position:absolute;left:103px;top:234px;width:737px;height:1px;background:#DADCDD;"></div>
<div style="position:absolute;left:103px;top:259px;width:737px;height:1px;background:#DADCDD;"></div>
<div style="position:absolute;left:103px;top:280px;width:737px;height:1px;background:#DADCDD;"></div>
<div style="position:absolute;left:103px;top:301px;width:737px;height:1px;background:#DADCDD;"></div>
<div style="position:absolute;left:103px;top:322px;width:737px;height:1px;background:#DADCDD;"></div>
<div style="position:absolute;left:103px;top:342px;width:737px;height:1px;background:#DADCDD;"></div>
<div style="position:absolute;left:263px;top:215px;width:1px;height:19px;background:#DADCDD;"></div>
<div style="position:absolute;left:424px;top:215px;width:1px;height:19px;background:#DADCDD;"></div>
<div style="position:absolute;left:616px;top:215px;width:1px;height:19px;background:#DADCDD;"></div>
<div style="position:absolute;left:777px;top:215px;width:1px;height:19px;background:#DADCDD;"></div>
<div style="position:absolute;left:263px;top:281px;width:1px;height:20px;background:#DADCDD;"></div>
<div style="position:absolute;left:424px;top:281px;width:1px;height:20px;background:#DADCDD;"></div>
<div style="position:absolute;left:616px;top:281px;width:1px;height:20px;background:#DADCDD;"></div>
<div style="position:absolute;left:777px;top:281px;width:1px;height:20px;background:#DADCDD;"></div>
<div style="position:absolute;left:263px;top:302px;width:1px;height:20px;background:#DADCDD;"></div>
<div style="position:absolute;left:424px;top:302px;width:1px;height:20px;background:#DADCDD;"></div>
<div style="position:absolute;left:616px;top:302px;width:1px;height:20px;background:#DADCDD;"></div>
<div style="position:absolute;left:777px;top:302px;width:1px;height:20px;background:#DADCDD;"></div>
<div style="position:absolute;left:263px;top:323px;width:1px;height:19px;background:#DADCDD;"></div>
<div style="position:absolute;left:424px;top:323px;width:1px;height:19px;background:#DADCDD;"></div>
<div style="position:absolute;left:616px;top:323px;width:1px;height:19px;background:#DADCDD;"></div>
<div style="position:absolute;left:777px;top:323px;width:1px;height:19px;background:#DADCDD;"></div>
<div class="t" style="left:349.0px;top:241.09px;font-size:16.2px;color:#000;line-height:16.2px;font-weight:bold;width:400px;text-align:center;">Таблица заработной платы персонала</div>
<div class="t" style="left:448.5px;top:263.33px;font-size:14.5px;color:#000;line-height:14.5px;font-weight:bold;width:200px;text-align:center;">за 2016 год</div>
<div style="position:absolute;left:103px;top:342px;width:737px;height:20px;background:#60497A;"></div>
<div style="position:absolute;left:103px;top:363px;width:160px;height:304px;background:#92D050;"></div>
<div style="position:absolute;left:263px;top:342px;width:577px;height:1px;background:#000;"></div>
<div style="position:absolute;left:103px;top:362px;width:737px;height:1px;background:#000;"></div>
<div style="position:absolute;left:103px;top:382px;width:737px;height:1px;background:#000;"></div>
<div style="position:absolute;left:103px;top:402px;width:737px;height:1px;background:#000;"></div>
<div style="position:absolute;left:103px;top:422px;width:737px;height:1px;background:#000;"></div>
<div style="position:absolute;left:103px;top:442px;width:737px;height:1px;background:#000;"></div>
<div style="position:absolute;left:103px;top:462px;width:737px;height:1px;background:#000;"></div>
<div style="position:absolute;left:103px;top:482px;width:737px;height:1px;background:#000;"></div>
<div style="position:absolute;left:103px;top:502px;width:737px;height:1px;background:#000;"></div>
<div style="position:absolute;left:103px;top:522px;width:737px;height:1px;background:#000;"></div>
<div style="position:absolute;left:103px;top:542px;width:737px;height:1px;background:#000;"></div>
<div style="position:absolute;left:103px;top:562px;width:737px;height:1px;background:#000;"></div>
<div style="position:absolute;left:103px;top:582px;width:737px;height:1px;background:#000;"></div>
<div style="position:absolute;left:103px;top:602px;width:737px;height:1px;background:#000;"></div>
<div style="position:absolute;left:103px;top:622px;width:737px;height:1px;background:#000;"></div>
<div style="position:absolute;left:103px;top:642px;width:737px;height:1px;background:#000;"></div>
<div style="position:absolute;left:103px;top:662px;width:737px;height:1px;background:#000;"></div>
<div style="position:absolute;left:263px;top:342px;width:1px;height:325px;background:#000;"></div>
<div style="position:absolute;left:424px;top:342px;width:1px;height:325px;background:#000;"></div>
<div style="position:absolute;left:616px;top:342px;width:1px;height:325px;background:#000;"></div>
<div style="position:absolute;left:777px;top:342px;width:1px;height:325px;background:#000;"></div>
<div class="t" style="left:108.0px;top:346.83px;font-size:13.2px;color:#FFF;line-height:13.2px;font-weight:bold;width:150px;text-align:center;">Имя</div>
<div class="t" style="left:268.5px;top:346.83px;font-size:13.2px;color:#FFF;line-height:13.2px;font-weight:bold;width:150px;text-align:center;">Пол</div>
<div class="t" style="left:425.0px;top:346.83px;font-size:13.2px;color:#FFF;line-height:13.2px;font-weight:bold;width:190px;text-align:center;">Категория персонала</div>
<div class="t" style="left:621.5px;top:346.83px;font-size:13.2px;color:#FFF;line-height:13.2px;font-weight:bold;width:150px;text-align:center;">Дата</div>
<div class="t" style="left:787.5px;top:346.83px;font-size:13.2px;color:#FFF;line-height:13.2px;font-weight:bold;">Сумма з</div>
<div class="t" style="left:105px;top:366.74px;font-size:13.3px;color:#000;line-height:13.3px;">Николаев А. Д.</div>
<div class="t" style="left:268.5px;top:366.74px;font-size:13.3px;color:#000;line-height:13.3px;width:150px;text-align:center;">муж.</div>
<div class="t" style="left:425.0px;top:366.96px;font-size:13.75px;color:#000;line-height:13.75px;width:190px;text-align:center;">Основной персонал</div>
<div class="t" style="left:621.5px;top:367.0px;font-size:13px;color:#000;line-height:13px;width:150px;text-align:center;">25.05.2016</div>
<div class="t" style="left:105px;top:386.74px;font-size:13.3px;color:#000;line-height:13.3px;">Сафронова В. М.</div>
<div class="t" style="left:268.5px;top:386.74px;font-size:13.3px;color:#000;line-height:13.3px;width:150px;text-align:center;">жен.</div>
<div class="t" style="left:425.0px;top:386.96px;font-size:13.75px;color:#000;line-height:13.75px;width:190px;text-align:center;">Основной персонал</div>
<div class="t" style="left:621.5px;top:387.0px;font-size:13px;color:#000;line-height:13px;width:150px;text-align:center;">25.05.2016</div>
<div class="t" style="left:105px;top:406.74px;font-size:13.3px;color:#000;line-height:13.3px;">Коваль Л. П.</div>
<div class="t" style="left:268.5px;top:406.74px;font-size:13.3px;color:#000;line-height:13.3px;width:150px;text-align:center;">жен.</div>
<div class="t" style="left:425.0px;top:406.96px;font-size:13.75px;color:#000;line-height:13.75px;width:190px;text-align:center;">Вспомогательный персонал</div>
<div class="t" style="left:621.5px;top:407.0px;font-size:13px;color:#000;line-height:13px;width:150px;text-align:center;">25.05.2016</div>
<div class="t" style="left:105px;top:426.74px;font-size:13.3px;color:#000;line-height:13.3px;">Парфенов Д. Ф.</div>
<div class="t" style="left:268.5px;top:426.74px;font-size:13.3px;color:#000;line-height:13.3px;width:150px;text-align:center;">муж.</div>
<div class="t" style="left:425.0px;top:426.96px;font-size:13.75px;color:#000;line-height:13.75px;width:190px;text-align:center;">Основной персонал</div>
<div class="t" style="left:621.5px;top:427.0px;font-size:13px;color:#000;line-height:13px;width:150px;text-align:center;">25.05.2016</div>
<div class="t" style="left:105px;top:446.74px;font-size:13.3px;color:#000;line-height:13.3px;">Петров Ф. Л.</div>
<div class="t" style="left:268.5px;top:446.74px;font-size:13.3px;color:#000;line-height:13.3px;width:150px;text-align:center;">муж.</div>
<div class="t" style="left:425.0px;top:446.96px;font-size:13.75px;color:#000;line-height:13.75px;width:190px;text-align:center;">Основной персонал</div>
<div class="t" style="left:621.5px;top:447.0px;font-size:13px;color:#000;line-height:13px;width:150px;text-align:center;">25.05.2016</div>
<div class="t" style="left:108.0px;top:467.0px;font-size:13px;color:#000;line-height:13px;width:150px;text-align:center;">25.05.2016</div>
<div class="t" style="left:105px;top:486.74px;font-size:13.3px;color:#000;line-height:13.3px;">Попова М. Д.</div>
<div class="t" style="left:268.5px;top:486.74px;font-size:13.3px;color:#000;line-height:13.3px;width:150px;text-align:center;">жен.</div>
<div class="t" style="left:425.0px;top:486.96px;font-size:13.75px;color:#000;line-height:13.75px;width:190px;text-align:center;">Вспомогательный персонал</div>
<div class="t" style="left:621.5px;top:487.0px;font-size:13px;color:#000;line-height:13px;width:150px;text-align:center;">23.06.2016</div>
<div class="t" style="left:105px;top:506.74px;font-size:13.3px;color:#000;line-height:13.3px;">Николаев А. Д.</div>
<div class="t" style="left:268.5px;top:506.74px;font-size:13.3px;color:#000;line-height:13.3px;width:150px;text-align:center;">муж.</div>
<div class="t" style="left:425.0px;top:506.96px;font-size:13.75px;color:#000;line-height:13.75px;width:190px;text-align:center;">Основной персонал</div>
<div class="t" style="left:621.5px;top:507.0px;font-size:13px;color:#000;line-height:13px;width:150px;text-align:center;">25.07.2016</div>
<div class="t" style="left:105px;top:526.74px;font-size:13.3px;color:#000;line-height:13.3px;">Сафронова В. М.</div>
<div class="t" style="left:268.5px;top:526.74px;font-size:13.3px;color:#000;line-height:13.3px;width:150px;text-align:center;">жен.</div>
<div class="t" style="left:425.0px;top:526.96px;font-size:13.75px;color:#000;line-height:13.75px;width:190px;text-align:center;">Основной персонал</div>
<div class="t" style="left:621.5px;top:527.0px;font-size:13px;color:#000;line-height:13px;width:150px;text-align:center;">25.07.2016</div>
<div class="t" style="left:105px;top:546.74px;font-size:13.3px;color:#000;line-height:13.3px;">Коваль Л. П.</div>
<div class="t" style="left:268.5px;top:546.74px;font-size:13.3px;color:#000;line-height:13.3px;width:150px;text-align:center;">жен.</div>
<div class="t" style="left:425.0px;top:546.96px;font-size:13.75px;color:#000;line-height:13.75px;width:190px;text-align:center;">Вспомогательный персонал</div>
<div class="t" style="left:621.5px;top:547.0px;font-size:13px;color:#000;line-height:13px;width:150px;text-align:center;">25.07.2016</div>
<div class="t" style="left:105px;top:566.74px;font-size:13.3px;color:#000;line-height:13.3px;">Парфенов Д. Ф.</div>
<div class="t" style="left:268.5px;top:566.74px;font-size:13.3px;color:#000;line-height:13.3px;width:150px;text-align:center;">муж.</div>
<div class="t" style="left:425.0px;top:566.96px;font-size:13.75px;color:#000;line-height:13.75px;width:190px;text-align:center;">Основной персонал</div>
<div class="t" style="left:621.5px;top:567.0px;font-size:13px;color:#000;line-height:13px;width:150px;text-align:center;">25.07.2016</div>
<div class="t" style="left:105px;top:586.74px;font-size:13.3px;color:#000;line-height:13.3px;">Петров Ф. Л.</div>
<div class="t" style="left:268.5px;top:586.74px;font-size:13.3px;color:#000;line-height:13.3px;width:150px;text-align:center;">муж.</div>
<div class="t" style="left:425.0px;top:586.96px;font-size:13.75px;color:#000;line-height:13.75px;width:190px;text-align:center;">Основной персонал</div>
<div class="t" style="left:621.5px;top:587.0px;font-size:13px;color:#000;line-height:13px;width:150px;text-align:center;">25.07.2016</div>
<div class="t" style="left:105px;top:606.74px;font-size:13.3px;color:#000;line-height:13.3px;">Попова М. Д.</div>
<div class="t" style="left:268.5px;top:606.74px;font-size:13.3px;color:#000;line-height:13.3px;width:150px;text-align:center;">жен.</div>
<div class="t" style="left:425.0px;top:606.96px;font-size:13.75px;color:#000;line-height:13.75px;width:190px;text-align:center;">Вспомогательный персонал</div>
<div class="t" style="left:621.5px;top:607.0px;font-size:13px;color:#000;line-height:13px;width:150px;text-align:center;">25.07.2016</div>
<div class="t" style="left:105px;top:626.74px;font-size:13.3px;color:#000;line-height:13.3px;">Николаев А. Д.</div>
<div class="t" style="left:268.5px;top:626.74px;font-size:13.3px;color:#000;line-height:13.3px;width:150px;text-align:center;">муж.</div>
<div class="t" style="left:425.0px;top:626.96px;font-size:13.75px;color:#000;line-height:13.75px;width:190px;text-align:center;">Основной персонал</div>
<div class="t" style="left:621.5px;top:627.0px;font-size:13px;color:#000;line-height:13px;width:150px;text-align:center;">24.08.2016</div>
<div class="t" style="left:105px;top:646.74px;font-size:13.3px;color:#000;line-height:13.3px;">Сафронова В. М.</div>
<div class="t" style="left:268.5px;top:646.74px;font-size:13.3px;color:#000;line-height:13.3px;width:150px;text-align:center;">жен.</div>
<div class="t" style="left:425.0px;top:646.96px;font-size:13.75px;color:#000;line-height:13.75px;width:190px;text-align:center;">Основной персонал</div>
<div class="t" style="left:621.5px;top:647.0px;font-size:13px;color:#000;line-height:13px;width:150px;text-align:center;">24.08.2016</div>
<div style="position:absolute;left:102px;top:461px;width:163px;height:3px;background:linear-gradient(#6D2FAF 0,#6D2FAF 1px,#FFFFFF 1px,#FFFFFF 2px,#6D2FAF 2px);"></div>
<div style="position:absolute;left:102px;top:481px;width:158px;height:3px;background:linear-gradient(#6D2FAF 0,#6D2FAF 1px,#FFFFFF 1px,#FFFFFF 2px,#6D2FAF 2px);"></div>
<div style="position:absolute;left:103px;top:461px;width:2px;height:23px;background:#6D2FAF;"></div>
<div style="position:absolute;left:262px;top:461px;width:1px;height:18px;background:#6D2FAF;"></div>
<div style="position:absolute;left:263px;top:461px;width:1px;height:18px;background:#FFFFFF;"></div>
<div style="position:absolute;left:264px;top:461px;width:1px;height:18px;background:#000000;"></div>
<div style="position:absolute;left:260px;top:481px;width:1px;height:3px;background:#000000;"></div>
<div style="position:absolute;left:261px;top:480px;width:2px;height:2px;background:#6D2FAF;"></div>
<div style="position:absolute;left:261px;top:483px;width:2px;height:2px;background:#6D2FAF;"></div>
<div style="position:absolute;left:264px;top:480px;width:2px;height:2px;background:#000;"></div>
<div style="position:absolute;left:264px;top:483px;width:2px;height:2px;background:#000;"></div>
<div style="position:absolute;left:263px;top:479px;width:1px;height:6px;background:#FFF;"></div>
<div style="position:absolute;left:261px;top:482px;width:5px;height:1px;background:#FFF;"></div>
<div style="position:absolute;left:840px;top:199px;width:16px;height:468px;background:linear-gradient(90deg,#D3D8E0,#E3E6EC 40%,#E3E6EC);"></div>
<div style="position:absolute;left:841px;top:199px;width:14px;height:4px;background:#FFF;border:1px solid #7F868F;"></div>
<svg style="position:absolute;left:843px;top:208px;" width="10" height="6" viewBox="0 0 10 6"><path d="M0.5 5.5 L5 0.5 L9.5 5.5 Z" fill="#4C4F55"/></svg>
<div style="position:absolute;left:840px;top:220px;width:15px;height:53px;background:linear-gradient(90deg,#F5F6F9,#E6E8EE 60%,#D6D9E0);border:1px solid #8A9098;border-radius:2px;"></div>
<div style="position:absolute;left:844px;top:243px;width:7px;height:1px;background:#6E737A;"></div>
<div style="position:absolute;left:844px;top:245px;width:7px;height:1px;background:#6E737A;"></div>
<div style="position:absolute;left:844px;top:247px;width:7px;height:1px;background:#6E737A;"></div>
<div style="position:absolute;left:844px;top:249px;width:7px;height:1px;background:#6E737A;"></div>
<svg style="position:absolute;left:843px;top:655.5px;" width="10" height="6" viewBox="0 0 10 6"><path d="M0.5 0.5 L5 5.5 L9.5 0.5 Z" fill="#4C4F55"/></svg>
<div style="position:absolute;left:40px;top:667px;width:816px;height:16px;background:#E1E4EA;border-top:1px solid #A3A8AF;"></div>
<div style="position:absolute;left:40px;top:682px;width:816px;height:2px;background:linear-gradient(#9499A0,#8E939A);"></div>
<svg style="position:absolute;left:45px;top:670px;" width="52" height="9" viewBox="0 0 52 9"><path d="M0.5 0.5 H2 V8.5 H0.5Z M2.5 4.5 L7 0.5 V8.5Z" fill="#4A4E55"/>
<path d="M16.5 4.5 L21 0.5 V8.5Z" fill="#4A4E55"/>
<path d="M30.5 0.5 L35 4.5 L30.5 8.5Z" fill="#4A4E55"/>
<path d="M44.5 0.5 L49 4.5 L44.5 8.5Z M49.5 0.5 H51 V8.5 H49.5Z" fill="#4A4E55"/></svg>
<div style="position:absolute;left:102px;top:667px;width:1px;height:16px;background:#B4B9C0;"></div>
<svg style="position:absolute;left:103px;top:667px;overflow:hidden;" width="417" height="15" viewBox="0 0 417 15"><rect x="0" y="0" width="417" height="15" fill="#E3E6EB"/><rect x="0" y="1" width="417" height="1" fill="#FFFFFF" opacity="0.8"/><rect x="0" y="1" width="1" height="14" fill="#FFFFFF" opacity="0.8"/><path d="M5.3 15 L19.3 1" stroke="#FFFFFF" stroke-width="1.2" transform="translate(1.2,0)"/><path d="M5.3 15 L19.3 1" stroke="#6A6F77" stroke-width="1"/><path d="M7.3 15 L9.3 13 L11.3 15 Z" fill="#F4F5F7"/><path d="M59.8 15 L73.8 1" stroke="#FFFFFF" stroke-width="1.2" transform="translate(1.2,0)"/><path d="M59.8 15 L73.8 1" stroke="#6A6F77" stroke-width="1"/><path d="M61.8 15 L63.8 13 L65.8 15 Z" fill="#F4F5F7"/><path d="M112.6 15 L126.6 1" stroke="#FFFFFF" stroke-width="1.2" transform="translate(1.2,0)"/><path d="M112.6 15 L126.6 1" stroke="#6A6F77" stroke-width="1"/><path d="M114.6 15 L116.6 13 L118.6 15 Z" fill="#F4F5F7"/><path d="M164.0 15 L178.0 1" stroke="#FFFFFF" stroke-width="1.2" transform="translate(1.2,0)"/><path d="M164.0 15 L178.0 1" stroke="#6A6F77" stroke-width="1"/><path d="M166.0 15 L168.0 13 L170.0 15 Z" fill="#F4F5F7"/><path d="M225.3 15 L239.3 1" stroke="#FFFFFF" stroke-width="1.2" transform="translate(1.2,0)"/><path d="M225.3 15 L239.3 1" stroke="#6A6F77" stroke-width="1"/><path d="M227.3 15 L229.3 13 L231.3 15 Z" fill="#F4F5F7"/><path d="M290.5 0 V15" stroke="#A3A8AF"/><rect x="291" y="0" width="50.5" height="15" fill="#FFFFFF"/><path d="M341.2 15 L355.2 1 L417 1 L417 15 Z" fill="#E3E6EB"/><rect x="355.2" y="1" width="80" height="1" fill="#FFFFFF" opacity="0.8"/><path d="M341.2 15 L355.2 1" stroke="#FFFFFF" stroke-width="1.2" transform="translate(1.2,0)"/><path d="M341.2 15 L355.2 1" stroke="#6A6F77" stroke-width="1"/><path d="M343.2 15 L345.2 13 L347.2 15 Z" fill="#F4F5F7"/><path d="M396.4 15 L410.4 1" stroke="#FFFFFF" stroke-width="1.2" transform="translate(1.2,0)"/><path d="M396.4 15 L410.4 1" stroke="#6A6F77" stroke-width="1"/><path d="M398.4 15 L400.4 13 L402.4 15 Z" fill="#F4F5F7"/></svg>
<div style="position:absolute;left:103px;top:667px;width:291px;height:1px;background:#A3A8AF;"></div>
<div style="position:absolute;left:445px;top:667px;width:75px;height:1px;background:#A3A8AF;"></div>
<div class="t" style="left:123.6px;top:669.61px;font-size:11.8px;color:#3C3C3C;line-height:11.8px;">Лист5</div>
<div class="t" style="left:176.5px;top:669.61px;font-size:11.8px;color:#3C3C3C;line-height:11.8px;">Лист8</div>
<div class="t" style="left:229px;top:669.61px;font-size:11.8px;color:#3C3C3C;line-height:11.8px;">Лист9</div>
<div class="t" style="left:283px;top:669.61px;font-size:11.8px;color:#3C3C3C;line-height:11.8px;">Лист10</div>
<div class="t" style="left:344px;top:669.61px;font-size:11.8px;color:#3C3C3C;line-height:11.8px;">Лист11</div>
<div class="t" style="left:403px;top:666.5px;font-size:12.3px;color:#2A2A2A;line-height:16px;font-weight:bold;">Лист1</div>
<div class="t" style="left:457px;top:669.61px;font-size:11.8px;color:#3C3C3C;line-height:11.8px;">Лист2</div>
<div style="position:absolute;left:509.5px;top:667px;width:10.5px;height:16px;overflow:hidden;"><div class="t" style="left:0;top:1.6px;font-size:11.8px;line-height:11.8px;color:#3C3C3C;">Лист</div></div>
<div style="position:absolute;left:520px;top:668px;width:8px;height:15px;background:#FFFFFF;border:1px solid #7F868F;"></div>
<div style="position:absolute;left:523px;top:671px;width:1px;height:9px;background:#777;"></div>
<div style="position:absolute;left:528px;top:667px;width:312px;height:16px;background:linear-gradient(#D5D9E0,#E3E6EC 40%,#E6E9EE);border-top:1px solid #A3A8AF;"></div>
<svg style="position:absolute;left:533px;top:671px;" width="6" height="9" viewBox="0 0 6 9"><path d="M5.5 0.5 L0.5 4.5 L5.5 8.5Z" fill="#4A4E55"/></svg>
<div style="position:absolute;left:545px;top:668px;width:168px;height:15px;background:linear-gradient(#F7F8FA,#E8EAEF 55%,#D9DCE2);border:1px solid #8A9098;border-radius:2px;"></div>
<div style="position:absolute;left:625px;top:672px;width:1px;height:7px;background:#6E737A;"></div>
<div style="position:absolute;left:627px;top:672px;width:1px;height:7px;background:#6E737A;"></div>
<div style="position:absolute;left:629px;top:672px;width:1px;height:7px;background:#6E737A;"></div>
<div style="position:absolute;left:631px;top:672px;width:1px;height:7px;background:#6E737A;"></div>
<svg style="position:absolute;left:821px;top:671px;" width="6" height="9" viewBox="0 0 6 9"><path d="M0.5 0.5 L5.5 4.5 L0.5 8.5Z" fill="#4A4E55"/></svg>
<div style="position:absolute;left:832px;top:668px;width:8px;height:15px;background:#FFFFFF;border:1px solid #7F868F;"></div>
<div style="position:absolute;left:835px;top:671px;width:1px;height:9px;background:#777;"></div>
<div style="position:absolute;left:840px;top:667px;width:16px;height:16px;background:#E1E4EA;"></div>
<div style="position:absolute;left:40px;top:684px;width:816px;height:21px;background:linear-gradient(#EDEFF3,#E1E4E9 50%,#D4D8DF);"></div>
<div style="position:absolute;left:39px;top:705px;width:818px;height:1px;background:#8D9299;"></div>
<div style="position:absolute;left:39px;top:683px;width:1px;height:23px;background:#5F6A76;"></div>
<div style="position:absolute;left:856px;top:683px;width:1px;height:23px;background:#5F6A76;"></div>
<div class="t" style="left:48.5px;top:687.98px;font-size:11.6px;color:#3A3A3A;line-height:11.6px;">Готово</div>
<div style="position:absolute;left:94px;top:686px;width:1px;height:18px;background:#B3B8BF;"></div>
<div style="position:absolute;left:95px;top:686px;width:1px;height:18px;background:#FAFBFC;"></div>
<svg style="position:absolute;left:104px;top:687px;" width="16" height="13" viewBox="0 0 16 13"><rect x="2.5" y="1.5" width="13" height="11" fill="#FFFFFF" stroke="#3C5C99"/>
<rect x="3" y="2" width="12" height="2.5" fill="#5B87D6"/>
<path d="M5 6.5 H8 M9 6.5 H14 M5 8.5 H8 M9 8.5 H14 M5 10.5 H8 M9 10.5 H14" stroke="#6F8FC8"/>
<circle cx="4" cy="3.8" r="3.3" fill="#E0442C"/><circle cx="3.2" cy="3" r="1.2" fill="#F7A08A"/></svg>
<div style="position:absolute;left:129px;top:686px;width:1px;height:18px;background:#B3B8BF;"></div>
<div style="position:absolute;left:130px;top:686px;width:1px;height:18px;background:#FAFBFC;"></div>
<div style="position:absolute;left:604px;top:685px;width:19px;height:19px;background:linear-gradient(#FDE9A6,#FBD46A);border:1px solid #E2B34A;border-radius:2px;"></div>
<svg style="position:absolute;left:607px;top:688px;" width="13" height="12" viewBox="0 0 13 12"><rect x="0.5" y="0.5" width="12" height="11" fill="#FFF" stroke="#4B5260"/><path d="M0.5 3.5 H12.5 M0.5 6.5 H12.5 M0.5 9 H12.5 M4.5 0.5 V11.5 M8.5 0.5 V11.5" stroke="#4B5260"/></svg>
<svg style="position:absolute;left:626px;top:688px;" width="13" height="12" viewBox="0 0 13 12"><rect x="0.5" y="0.5" width="12" height="11" fill="#B9BEC6" stroke="#4B5260"/><rect x="3" y="2.5" width="7" height="7" fill="#FFF" stroke="#4B5260"/></svg>
<svg style="position:absolute;left:644px;top:688px;" width="14" height="12" viewBox="0 0 14 12"><rect x="0.5" y="0.5" width="13" height="11" fill="#B9BEC6" stroke="#4B5260"/><rect x="1" y="1" width="5" height="7" fill="#FFF"/><rect x="7" y="1" width="4" height="7" fill="#FFF"/><path d="M6.5 0.5 V8.5 M11.5 0.5 V8.5 M0.5 8.5 H13.5" stroke="#4B5260"/></svg>
<div class="t" style="left:670px;top:688.01px;font-size:11.8px;color:#3A3A3A;line-height:11.8px;">100%</div>
<svg style="position:absolute;left:704px;top:686px;" width="18" height="18" viewBox="0 0 18 18"><circle cx="9" cy="9" r="8" fill="url(#zg)" stroke="#7E848C"/><defs><linearGradient id="zg" x1="0" y1="0" x2="0" y2="1"><stop offset="0" stop-color="#FFFFFF"/><stop offset="1" stop-color="#DADDE2"/></linearGradient></defs><path d="M5 9 H13" stroke="#3C4048" stroke-width="2"/></svg>
<div style="position:absolute;left:722px;top:694px;width:100px;height:1px;background:#A5AAB2;"></div>
<div style="position:absolute;left:722px;top:695px;width:100px;height:1px;background:#FFFFFF;"></div>
<svg style="position:absolute;left:765px;top:687px;" width="12" height="16" viewBox="0 0 12 16"><path d="M0.5 0.5 H11.5 V10 L6 15 L0.5 10 Z" fill="url(#tg)" stroke="#6E747C"/><defs><linearGradient id="tg" x1="0" y1="0" x2="0" y2="1"><stop offset="0" stop-color="#FFFFFF"/><stop offset="1" stop-color="#D8DBE0"/></linearGradient></defs></svg>
<svg style="position:absolute;left:820px;top:686px;" width="18" height="18" viewBox="0 0 18 18"><circle cx="9" cy="9" r="8" fill="url(#zg2)" stroke="#7E848C"/><defs><linearGradient id="zg2" x1="0" y1="0" x2="0" y2="1"><stop offset="0" stop-color="#FFFFFF"/><stop offset="1" stop-color="#DADDE2"/></linearGradient></defs><path d="M5 9 H13 M9 5 V13" stroke="#3C4048" stroke-width="2"/></svg>
<svg style="position:absolute;left:845px;top:694px;" width="10" height="10" viewBox="0 0 10 10"><rect x="7" y="1" width="2" height="2" fill="#A9AEB5"/><rect x="4" y="4" width="2" height="2" fill="#A9AEB5"/><rect x="7" y="4" width="2" height="2" fill="#A9AEB5"/><rect x="1" y="7" width="2" height="2" fill="#A9AEB5"/><rect x="4" y="7" width="2" height="2" fill="#A9AEB5"/><rect x="7" y="7" width="2" height="2" fill="#A9AEB5"/></svg>
<div style="position:absolute;left:39px;top:83px;width:1px;height:623px;background:#5F6A76;"></div>
<div style="position:absolute;left:856px;top:83px;width:1px;height:623px;background:#5F6A76;"></div>
<div style="position:absolute;left:42px;top:465px;width:16px;height:16px;background:linear-gradient(#F0F2F5,#DFE2E7);border:1px solid #8E9296;"></div>
<svg style="position:absolute;left:44px;top:467px;" width="12" height="12" viewBox="0 0 12 12"><path d="M6 2 V10 M2 6 H10" stroke="#000" stroke-width="2"/></svg>
<div style="position:absolute;left:30.5px;top:454.8px;width:37.5px;height:45px;border:5px solid #F00;border-radius:13px;box-shadow:2px 3px 4px rgba(0,0,0,0.45), inset 2px 3px 4px rgba(0,0,0,0.35);"></div></body></html>
